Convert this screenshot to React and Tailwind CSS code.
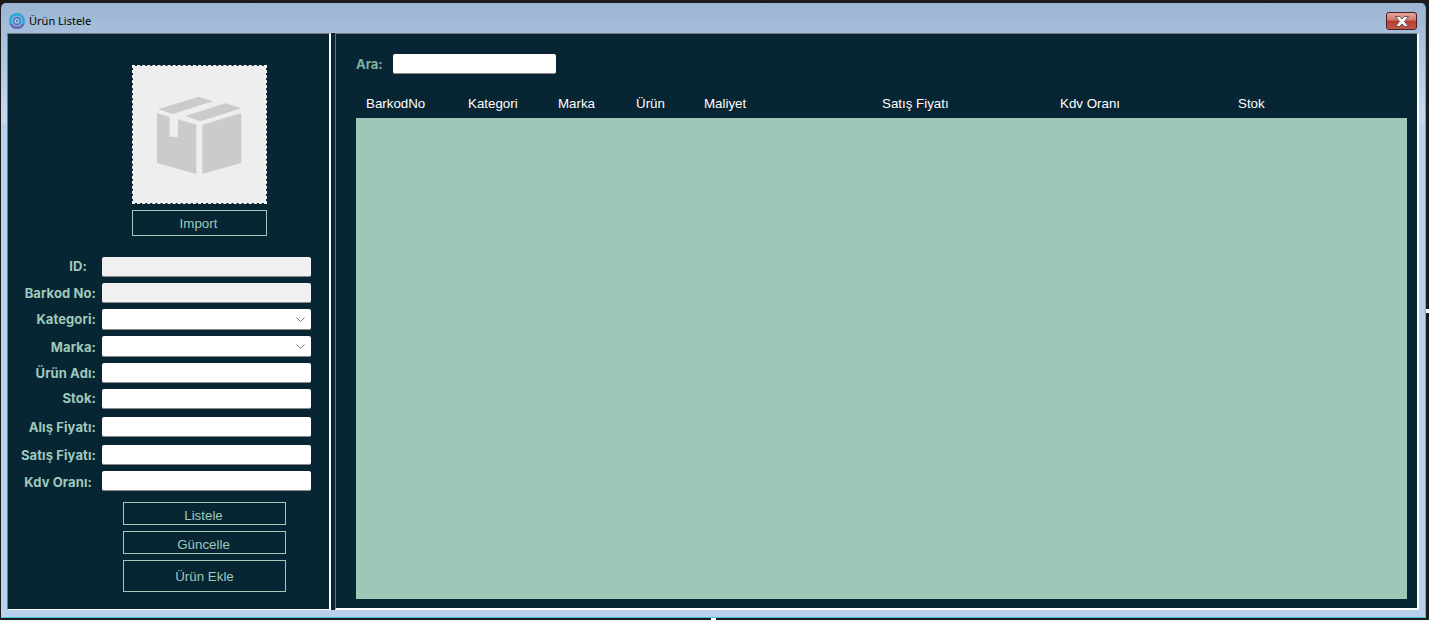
import React from 'react';

const FIELDS = [
  { label: 'ID:', kind: 'disabled', top: 'mt-0', pr: 'pr-[15px]', nudge: 'pt-0' },
  { label: 'Barkod No:', kind: 'disabled', top: 'mt-[6px]', pr: 'pr-[6px]', nudge: 'pt-[2px]' },
  { label: 'Kategori:', kind: 'select', top: 'mt-[6px]', pr: 'pr-[6px]', nudge: 'pt-0' },
  { label: 'Marka:', kind: 'select', top: 'mt-[6px]', pr: 'pr-[6px]', nudge: 'pt-[2px]' },
  { label: 'Ürün Adı:', kind: 'text', top: 'mt-[6px]', pr: 'pr-[6px]', nudge: 'pt-[2px]' },
  { label: 'Stok:', kind: 'text', top: 'mt-[6px]', pr: 'pr-[6px]', nudge: 'pt-0' },
  { label: 'Alış Fiyatı:', kind: 'text', top: 'mt-[8px]', pr: 'pr-[6px]', nudge: 'pt-[2px]' },
  { label: 'Satış Fiyatı:', kind: 'text', top: 'mt-[8px]', pr: 'pr-[6px]', nudge: 'pt-[2px]' },
  { label: 'Kdv Oranı:', kind: 'text', top: 'mt-[6px]', pr: 'pr-[10px]', nudge: 'pt-[4px]' },
];

const COLUMNS = [
  { name: 'BarkodNo', w: 'w-[102px]' },
  { name: 'Kategori', w: 'w-[90px]' },
  { name: 'Marka', w: 'w-[78px]' },
  { name: 'Ürün', w: 'w-[68px]' },
  { name: 'Maliyet', w: 'w-[178px]' },
  { name: 'Satış Fiyatı', w: 'w-[178px]' },
  { name: 'Kdv Oranı', w: 'w-[178px]' },
  { name: 'Stok', w: 'w-[100px]' },
];

const AppIcon = () => (
  <svg width="16" height="16" viewBox="0 0 16 16" className="shrink-0">
    <circle cx="8" cy="8" r="8" fill="#2aa5d6" />
    <path d="M.6 11a8 8 0 0 0 14.8 0z" fill="#6f63b5" />
    <circle cx="8" cy="8" r="5.6" fill="#8fb4d6" />
    <circle cx="8" cy="8" r="4.2" fill="#3c7dc0" />
    <circle cx="8" cy="8" r="2.6" fill="#a9c6e0" />
    <circle cx="8" cy="8" r="1.2" fill="#4f86c2" />
  </svg>
);

const BoxPicture = () => (
  <svg viewBox="25 16 399 411" className="h-full w-full">
    <g fill="#cbcbcb">
      <path d="M100 146 222 108 265 122 145 160z" />
      <path d="M182 166 303 128 350 143 228 182z" />
      <path d="M97 158 135 169V228H160V176L215 192V340L97 307z" />
      <path d="M233 192 350 157V307L233 340z" />
    </g>
  </svg>
);

const OutlineButton = ({ children, className = '' }) => (
  <div className={`flex items-center justify-center border border-[#9fc9bb] font-['Liberation_Sans',sans-serif] text-[13.33px] leading-[16px] text-[#9fc9bb] ${className}`}>
    {children}
  </div>
);

const Field = ({ label, kind, top, pr, nudge }) => (
  <div className={`flex items-center ${top}`}>
    <div className={`mb-[2px] w-[94px] text-right font-['Inter',sans-serif] text-[13px] font-bold leading-[14px] tracking-[0.1px] text-[#9fc9bb] ${pr} ${nudge}`}>{label}</div>
    <div
      className={`flex w-[209px] items-center justify-end rounded-[2px] border-b border-[#8a8a8a] pr-[6px] ${
        kind === 'select' ? 'h-[21px]' : 'h-[20px]'
      } ${kind === 'disabled' ? 'bg-[#f0f0f0]' : 'bg-white'}`}
    >
      {kind === 'select' && (
        <svg width="9" height="5" viewBox="0 0 9 5">
          <path d="M.5.5 4.5 4.5 8.5.5" fill="none" stroke="#777" />
        </svg>
      )}
    </div>
  </div>
);

const App = () => (
  <div className="relative h-[620px] w-[1429px] overflow-hidden bg-[#1b1b1b]">
    <div className="ml-px mr-[3px] mt-[3px] flex h-[615px] flex-col rounded-t-[5px] border-b border-r border-[#3fc1dc] bg-[linear-gradient(#9bb5d2_0px,#c6daf1_118px,#b9d1ec_122px)]">
      {/* Title bar */}
      <div className="flex h-[30px] shrink-0 items-start pl-[8px] pr-[8px] pt-[10px]">
        <AppIcon />
        <span className="ml-[4px] font-['Noto_Sans',sans-serif] text-[11px] leading-[16px] text-black">Ürün Listele</span>
        <div className="ml-auto -mt-[1px] flex h-[18px] w-[31px] items-center justify-center rounded-[3px] border border-[#4e1a22] bg-[linear-gradient(#e5a79d_0%,#d0766a_45%,#b53a2a_50%,#c55a48_100%)]">
          <svg width="16" height="11" viewBox="0 0 16 11">
            <path d="M1.5.5h4.2L8 3 10.3.5h4.2L10.6 5.5l3.9 5h-4.2L8 8l-2.3 2.5H1.5l3.9-5z" fill="#f4f4f4" stroke="#5a3a3a" strokeWidth=".8" />
          </svg>
        </div>
      </div>

      <div className="flex h-[577px] shrink-0 pl-[6px]">
        {/* Left panel */}
        <div className="h-full w-[324px] shrink-0 border-b border-l border-r-2 border-t border-b-white border-l-[#7a7a7a] border-r-white border-t-[#7a7a7a] bg-[#082533]">
          <div className="flex flex-col pl-[124px] pt-[31px]">
            <div className="h-[139px] w-[135px] border border-dashed border-white bg-[#eeeeee] bg-clip-padding">
              <BoxPicture />
            </div>
            <OutlineButton className="mt-[6px] h-[26px] w-[135px] pr-[2px] pt-[2px]">Import</OutlineButton>
          </div>

          <div className="mt-[21px] flex flex-col">
            {FIELDS.map(f => <Field key={f.label} {...f} />)}
          </div>

          <div className="mt-[11px] flex flex-col gap-[6px] pl-[115px]">
            <OutlineButton className="h-[23px] w-[163px] pr-[2px] pt-[5px]">Listele</OutlineButton>
            <OutlineButton className="h-[23px] w-[163px] pr-[2px] pt-[5px]">Güncelle</OutlineButton>
            <OutlineButton className="h-[32px] w-[163px] pt-[2px]">Ürün Ekle</OutlineButton>
          </div>
        </div>

        {/* Right panel */}
        <div className="h-full w-[1088px] shrink-0 bg-[#082533] pl-[4px]">
          <div className="flex h-[577px] flex-col border-b-2 border-l border-r-2 border-t border-b-white border-l-[#6f6f6f] border-r-white border-t-[#7a7a7a] pb-[9px] pl-[20px] pr-[10px] pt-[20px]">
            <div className="flex h-[20px] shrink-0 items-center">
              <span className="w-[37px] font-['Inter',sans-serif] text-[13px] font-bold leading-[16px] text-[#7fb0a2]">Ara:</span>
              <div className="h-[20px] w-[163px] rounded-[2px] border-b border-[#8a8a8a] bg-white" />
            </div>
            <div className="flex h-[44px] shrink-0 items-start pl-[10px] pt-[21px]">
              {COLUMNS.map(c => (
                <div key={c.name} className={`${c.w} font-['Liberation_Sans',sans-serif] text-[13.33px] leading-[18px] text-white`}>{c.name}</div>
              ))}
            </div>
            <div className="flex-1 bg-[#9fc7b8]" />
          </div>
        </div>
      </div>
    </div>

    {/* stray capture specks at the window edge */}
    <div className="absolute left-[711px] top-[618px] h-[2px] w-[5px] bg-white" />
    <div className="absolute left-[1426px] top-[309px] h-[4px] w-[3px] bg-white" />
  </div>
);

export default App;
